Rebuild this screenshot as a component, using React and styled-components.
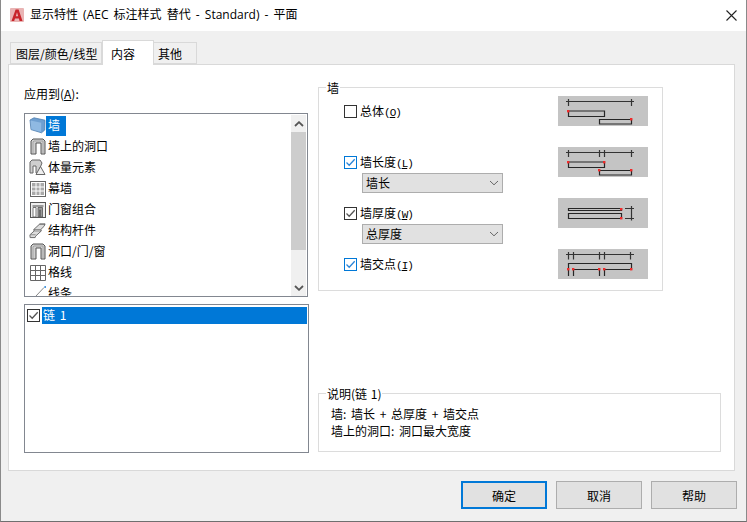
import React from "react";
import styled, { createGlobalStyle } from "styled-components";

const GlobalStyle = createGlobalStyle`
  html, body {
    margin: 0;
    padding: 0;
    background: #f0f0f0;
  }
  * {
    box-sizing: border-box;
  }
`;

const Window = styled.div`
  width: 747px;
  height: 522px;
  display: flex;
  flex-direction: column;
  background: #f0f0f0;
  border-right: 1px solid #8a8a8a;
  border-bottom: 1px solid #6f6f6f;
  border-left: 1px solid #8a8a8a;
  font-family: "Noto Sans CJK SC", "Liberation Sans", sans-serif;
  font-size: 12px;
  color: #000;
  overflow: hidden;
`;

const TitleBar = styled.div`
  height: 31px;
  flex: 0 0 auto;
  display: flex;
  align-items: center;
  background: #fff;
  padding: 0 9px 1px 9px;
`;

const TitleText = styled.span`
  margin-left: 6px;
  flex: 1;
  line-height: 16px;
  white-space: pre;
  word-spacing: 2px;
  font-family: "Open Sans", "Noto Sans CJK SC", sans-serif;
`;

const Content = styled.div`
  flex: 1;
  display: flex;
  flex-direction: column;
  padding: 9px 11px 13px 7px;
`;

const TabStrip = styled.div`
  height: 24px;
  flex: 0 0 auto;
  display: flex;
  align-items: flex-end;
  padding-left: 2px;
  position: relative;
  z-index: 1;
`;

const Tab = styled.div`
  width: ${({ $width }) => $width}px;
  height: ${({ $active }) => ($active ? 25 : 22)}px;
  margin-bottom: ${({ $active }) => ($active ? -1 : 0)}px;
  padding-left: ${({ $pad }) => $pad}px;
  display: flex;
  align-items: center;
  background: ${({ $active }) => ($active ? "#fff" : "#f0f0f0")};
  border: 1px solid #d9d9d9;
  border-bottom: ${({ $active }) => ($active ? "none" : "1px solid #d9d9d9")};
  border-left: ${({ $active, $first }) =>
    $active || $first ? "1px solid #d9d9d9" : "none"};
  border-right: 1px solid #d9d9d9;
  white-space: nowrap;
`;

const Panel = styled.div`
  width: 727px;
  height: 407px;
  display: flex;
  background: #fff;
  border: 1px solid #d9d9d9;
`;

const LeftColumn = styled.div`
  width: 284px;
  margin-left: 15px;
  display: flex;
  flex-direction: column;
`;

const ApplyLabel = styled.label`
  height: 48px;
  padding-top: 20px;
  line-height: 17px;
  display: block;
`;

const AppliesList = styled.div`
  width: 284px;
  height: 184px;
  display: flex;
  background: #fff;
  border: 1px solid #828790;
  overflow: hidden;
`;

const AppliesItems = styled.ul`
  flex: 1;
  list-style: none;
  margin: 0;
  padding: 1px 0 0 4px;
`;

const AppliesItem = styled.li`
  height: 21px;
  display: flex;
  align-items: center;
`;

const IconSlot = styled.span`
  width: 17px;
  height: 19px;
  display: flex;
  align-items: center;
  justify-content: center;
  flex: 0 0 auto;
`;

const ItemText = styled.span`
  height: 20px;
  line-height: 17px;
  padding: 0 ${({ $selected }) => ($selected ? "6px" : "2px")} 0 2px;
  background: ${({ $selected }) => ($selected ? "#0078d7" : "transparent")};
  color: ${({ $selected }) => ($selected ? "#fff" : "#000")};
`;

const ScrollBar = styled.div`
  width: 15px;
  margin: 1px 1px 0 0;
  display: flex;
  flex-direction: column;
  background: #f0f0f0;
`;

const ScrollArrow = styled.div`
  height: 17px;
  display: flex;
  align-items: center;
  justify-content: center;
  flex: 0 0 auto;
`;

const ScrollThumb = styled.div`
  height: 118px;
  background: #cdcdcd;
  flex: 0 0 auto;
`;

const ScrollTrack = styled.div`
  flex: 1;
`;

const ChainList = styled.div`
  width: 285px;
  height: 149px;
  margin-top: 7px;
  padding: 1px 1px 0 2px;
  background: #fff;
  border: 1px solid #828790;
`;

const ChainRow = styled.div`
  height: 18px;
  display: flex;
  align-items: center;
`;

const ChainText = styled.span`
  flex: 1;
  height: 17px;
  margin-left: 2px;
  padding-left: 1px;
  line-height: 15px;
  word-spacing: 2px;
  background: #0078d7;
  color: #fff;
`;

const RightColumn = styled.div`
  width: 403px;
  margin-left: 10px;
  padding: 14px 0 18px 0;
  display: flex;
  flex-direction: column;
  justify-content: space-between;
`;

const GroupBox = styled.fieldset`
  width: ${({ $width }) => $width}px;
  height: ${({ $height }) => $height}px;
  margin: 0;
  padding: ${({ $padding }) => $padding};
  border: 1px solid #dcdcdc;
  min-width: 0;
`;

const GroupLegend = styled.legend`
  margin-left: ${({ $indent }) => $indent}px;
  padding: 0 1px;
  line-height: 17px;
  height: 17px;
  word-spacing: 1px;
`;

const OptionGrid = styled.div`
  display: grid;
  grid-template-columns: 1fr 90px;
  grid-auto-rows: 30px;
  row-gap: 21px;
`;

const Option = styled.div`
  padding-top: 9px;
`;

const CheckRow = styled.label`
  height: 13px;
  display: flex;
  align-items: center;
  gap: 3px;
  line-height: 13px;
`;

const CheckLabel = styled.span`
  white-space: nowrap;
`;

const KeyHint = styled.span`
  font-family: "Liberation Mono", monospace;
  font-size: 11px;
  letter-spacing: -1px;
`;

const CheckBox = styled.span`
  width: 13px;
  height: 13px;
  flex: 0 0 auto;
  display: flex;
  align-items: center;
  justify-content: center;
  background: #fff;
  border: 1px solid ${({ $blue }) => ($blue ? "#0078d7" : "#333")};
`;

const Combo = styled.div`
  width: 141px;
  height: 20px;
  margin: 4px 0 0 18px;
  padding: 0 3px 0 3px;
  display: flex;
  align-items: center;
  justify-content: space-between;
  background: #e1e1e1;
  border: 1px solid #adadad;
  line-height: 15px;
`;

const ComboText = styled.span`
  padding-bottom: 2px;
`;

const DescriptionLine = styled.div`
  line-height: 17px;
  word-spacing: 2px;
`;

const ButtonRow = styled.div`
  display: flex;
  justify-content: flex-end;
  gap: 9px;
  margin: 10px -2px 0 0;
`;

const Button = styled.button`
  width: 86px;
  height: 28px;
  padding: 0;
  background: #e1e1e1;
  border: ${({ $primary }) =>
    $primary ? "2px solid #0078d7" : "1px solid #adadad"};
  font: inherit;
  color: #000;
`;

const CheckMark = ({ color }) => (
  <svg width="11" height="11" viewBox="0 0 11 11">
    <path d="M1.5 5.5 L4.2 8.2 L9.7 2.2" fill="none" stroke={color} strokeWidth="1.3" />
  </svg>
);

const Check = ({ checked, blue }) => (
  <CheckBox $blue={blue}>
    {checked && <CheckMark color={blue ? "#2a85d8" : "#555"} />}
  </CheckBox>
);

const AppLogo = () => (
  <svg width="14" height="14" viewBox="0 0 14 14">
    <rect width="14" height="14" fill="#e9b4b4" rx="1" />
    <path d="M1.5 13 L5.6 1.5 H8.6 L12.5 13 H9.6 L8.9 10.4 H5 L4.2 13 Z M5.8 8.2 H8.2 L7 4.2 Z" fill="#c8242a" fillRule="evenodd" />
  </svg>
);

const CloseIcon = () => (
  <svg width="11" height="11" viewBox="0 0 11 11">
    <path d="M0.5 0.5 L10.5 10.5 M10.5 0.5 L0.5 10.5" stroke="#222" strokeWidth="1.1" />
  </svg>
);

const Chevron = ({ up, color = "#555", width = 1.8 }) => (
  <svg width="10" height="6" viewBox="0 0 10 6">
    <path
      d={up ? "M1 5 L5 1.2 L9 5" : "M1 1 L5 4.8 L9 1"}
      fill="none"
      stroke={color}
      strokeWidth={width}
    />
  </svg>
);

const WallIcon = () => (
  <svg width="17" height="17" viewBox="0 0 17 17">
    <path d="M1 3 L5 0.8 L16 3.2 L15.8 13 L12.5 15.8 L2 12.6 Z" fill="#6f9fd0" stroke="#4f7fb0" strokeWidth="0.8" />
    <path d="M1.5 3.4 L12.2 5.8 L12.1 15 L2.4 12.2 Z" fill="#8fb9e2" />
  </svg>
);

const ArchIcon = () => (
  <svg width="16" height="17" viewBox="0 0 16 17">
    <path d="M1 16 V3 L3 1 H13 L15 3 V16 H11 V5 H6 V16 Z" fill="#cfcfcf" stroke="#555" strokeWidth="1" />
    <path d="M3 16 V4 L4 3 H13 V16" fill="none" stroke="#999" strokeWidth="0.8" />
  </svg>
);

const MassIcon = () => (
  <svg width="17" height="17" viewBox="0 0 17 17">
    <path d="M1 14 V3 L3 1 H11 L13 4 L9 14 H7 V7 H4 V14 Z" fill="#cfcfcf" stroke="#666" strokeWidth="1" />
    <path d="M7 15.5 L11.5 7.5 L16 15.5 Z" fill="#eee" stroke="#666" strokeWidth="1" />
  </svg>
);

const CurtainIcon = () => (
  <svg width="16" height="16" viewBox="0 0 16 16">
    <rect x="0.5" y="0.5" width="15" height="15" fill="#fff" stroke="#666" />
    <path d="M2 2 H14 V14 H2 Z" fill="#aaa" />
    <path d="M6 2 V14 M10 2 V14 M2 6 H14 M2 10 H14" stroke="#fff" strokeWidth="1" />
  </svg>
);

const AssemblyIcon = () => (
  <svg width="16" height="16" viewBox="0 0 16 16">
    <rect x="0.5" y="0.5" width="15" height="15" fill="#eee" stroke="#555" />
    <path d="M2.5 3 H13.5 V5 H2.5 Z" fill="#999" />
    <path d="M3 15 V5.5 H6 V15 Z" fill="#fff" stroke="#555" strokeWidth="0.8" />
    <path d="M8 15 V5.5 H12.5 V15 H10.5 V8 H9.5 V15 Z" fill="#999" stroke="#555" strokeWidth="0.8" />
  </svg>
);

const MemberIcon = () => (
  <svg width="18" height="17" viewBox="0 0 18 17">
    <path d="M1 13 L5.5 9 L5 7.5 L11.5 1.5 H17 L16 4 L12.5 7.5 L13 9 L7 14.5 L6.5 16 H1.2 Z" fill="#ddd" stroke="#666" strokeWidth="1" />
    <path d="M5 7.5 H12.5 M5.5 9 H13 M2 13 H7 M11 2 L17 2" fill="none" stroke="#666" strokeWidth="0.7" />
  </svg>
);

const GridIcon = () => (
  <svg width="16" height="16" viewBox="0 0 16 16">
    <path d="M0.5 0.5 H15.5 V15.5 H0.5 Z M5.5 0.5 V15.5 M10.5 0.5 V15.5 M0.5 5.5 H15.5 M0.5 10.5 H15.5" fill="#fff" stroke="#666" />
  </svg>
);

const LineIcon = () => (
  <svg width="16" height="16" viewBox="0 0 16 16">
    <path d="M6 10 L14 1.5" stroke="#777" strokeWidth="0.9" />
    <rect x="14.4" y="0.2" width="1.6" height="1.6" fill="#1e7fd6" />
  </svg>
);

const Diagram = ({ children }) => (
  <svg width="90" height="30" viewBox="0 0 90 30" fill="none">
    <rect width="90" height="30" fill="#c4c4c4" />
    {children}
  </svg>
);

const Ink = styled.path`
  stroke: #262626;
  stroke-width: 1.2;
  fill: none;
`;

const Dim = styled.path`
  stroke: #333;
  stroke-width: 1.2;
  fill: none;
`;

const Mark = ({ x, y }) => <rect x={x - 1} y={y - 1} width="2.4" height="2.4" fill="#f02a2a" />;

const OverallDiagram = () => (
  <Diagram>
    <Dim d="M8 5.5 H76 M10.5 3 V10 M73.5 3 V10" />
    <Ink d="M10.5 15 H46.5 V20.5 H10.5 Z M41.5 23.5 H73.5 V28 H41.5 Z" />
    <Mark x={10} y={15} />
    <Mark x={73} y={23} />
  </Diagram>
);

const LengthDiagram = () => (
  <Diagram>
    <Dim d="M8 5.5 H76 M10.5 3 V10 M41.5 3 V10 M46.5 3 V10 M73.5 3 V10" />
    <Ink d="M10.5 15 H46.5 V20.5 H10.5 Z M41.5 23.5 H73.5 V28 H41.5 Z" />
    <Mark x={10} y={15} />
    <Mark x={46} y={15} />
    <Mark x={41} y={23} />
    <Mark x={73} y={23} />
  </Diagram>
);

const ThicknessDiagram = () => (
  <Diagram>
    <Ink d="M10.5 10.5 H63.5 V12.5 H10.5 Z M10.5 15.5 H63.5 V20.5 H10.5 Z" />
    <Dim d="M67 10.5 H76 M67 20.5 H76 M73.5 8 V22.5" />
    <Mark x={63} y={11} />
    <Mark x={63} y={20} />
  </Diagram>
);

const JunctionDiagram = () => (
  <Diagram>
    <Dim d="M8 5.5 H76 M10.5 3 V10.5 M15.5 3 V10.5 M41.5 3 V10.5 M46.5 3 V10.5 M72.5 3 V10.5" />
    <Ink d="M10.5 27 V14.5 H73.5 V20.5 H46.5 V27 M41.5 27 V20.5 H15.5 V27" />
    <Mark x={10} y={20} />
    <Mark x={15} y={20} />
    <Mark x={41} y={20} />
    <Mark x={46} y={20} />
    <Mark x={73} y={20} />
  </Diagram>
);

const appliesItems = [
  { label: "墙", Icon: WallIcon, selected: true },
  { label: "墙上的洞口", Icon: ArchIcon },
  { label: "体量元素", Icon: MassIcon },
  { label: "幕墙", Icon: CurtainIcon },
  { label: "门窗组合", Icon: AssemblyIcon },
  { label: "结构杆件", Icon: MemberIcon },
  { label: "洞口/门/窗", Icon: ArchIcon },
  { label: "格线", Icon: GridIcon },
  { label: "线条", Icon: LineIcon },
];

const options = [
  { label: "总体", key: "O", Figure: OverallDiagram },
  { label: "墙长度", key: "L", checked: true, blue: true, combo: "墙长", Figure: LengthDiagram },
  { label: "墙厚度", key: "W", checked: true, combo: "总厚度", Figure: ThicknessDiagram },
  { label: "墙交点", key: "I", checked: true, blue: true, Figure: JunctionDiagram },
];

export default function App() {
  return (
    <>
      <GlobalStyle />
      <Window>
        <TitleBar>
          <AppLogo />
          <TitleText>显示特性 (AEC 标注样式 替代 - Standard) - 平面</TitleText>
          <CloseIcon />
        </TitleBar>
        <Content>
          <TabStrip>
            <Tab $width={92} $pad={5} $first>图层/颜色/线型</Tab>
            <Tab $width={52} $pad={8} $active>内容</Tab>
            <Tab $width={43} $pad={4}>其他</Tab>
          </TabStrip>
          <Panel>
            <LeftColumn>
              <ApplyLabel>应用到(<u>A</u>):</ApplyLabel>
              <AppliesList>
                <AppliesItems>
                  {appliesItems.map(({ label, Icon, selected }) => (
                    <AppliesItem key={label}>
                      <IconSlot><Icon /></IconSlot>
                      <ItemText $selected={selected}>{label}</ItemText>
                    </AppliesItem>
                  ))}
                </AppliesItems>
                <ScrollBar>
                  <ScrollArrow><Chevron up /></ScrollArrow>
                  <ScrollThumb />
                  <ScrollTrack />
                  <ScrollArrow><Chevron /></ScrollArrow>
                </ScrollBar>
              </AppliesList>
              <ChainList>
                <ChainRow>
                  <Check checked />
                  <ChainText>链 1</ChainText>
                </ChainRow>
              </ChainList>
            </LeftColumn>
            <RightColumn>
              <GroupBox $width={345} $height={212} $padding="0 14px 0 25px">
                <GroupLegend $indent={-18}>墙</GroupLegend>
                <OptionGrid>
                  {options.map(({ label, key, checked, blue, combo, Figure }) => (
                    <React.Fragment key={key}>
                      <Option>
                        <CheckRow>
                          <Check checked={checked} blue={blue} />
                          <CheckLabel>{label}<KeyHint>(<u>{key}</u>)</KeyHint></CheckLabel>
                        </CheckRow>
                        {combo && (
                          <Combo>
                            <ComboText>{combo}</ComboText>
                            <Chevron color="#666" width={1} />
                          </Combo>
                        )}
                      </Option>
                      <Figure />
                    </React.Fragment>
                  ))}
                </OptionGrid>
              </GroupBox>
              <GroupBox $width={403} $height={67} $padding="3px 12px 0 12px">
                <GroupLegend $indent={-5}>说明(链 1)</GroupLegend>
                <DescriptionLine>墙: 墙长 + 总厚度 + 墙交点</DescriptionLine>
                <DescriptionLine>墙上的洞口: 洞口最大宽度</DescriptionLine>
              </GroupBox>
            </RightColumn>
          </Panel>
          <ButtonRow>
            <Button $primary>确定</Button>
            <Button>取消</Button>
            <Button>帮助</Button>
          </ButtonRow>
        </Content>
      </Window>
    </>
  );
}
